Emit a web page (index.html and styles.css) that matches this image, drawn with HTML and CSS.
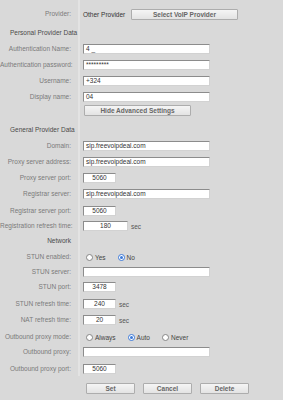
FILE: index.html
```html
<!DOCTYPE html>
<html>
<head>
<meta charset="utf-8">
<link rel="stylesheet" href="styles.css">
</head>
<body>
<div class="form">
  <div class="row h19 first">
    <div class="lab">Provider:</div>
    <div class="val"><span class="text">Other Provider</span><button class="btn wide sel">Select VoIP Provider</button></div>
  </div>
  <div class="row">
    <div class="lab"><span class="head left">Personal Provider Data</span></div>
    <div class="val"></div>
  </div>
  <div class="row">
    <div class="lab">Authentication Name:</div>
    <div class="val"><span class="inp long">4 _</span></div>
  </div>
  <div class="row">
    <div class="lab">Authentication password:</div>
    <div class="val"><span class="inp long">*********</span></div>
  </div>
  <div class="row">
    <div class="lab">Username:</div>
    <div class="val"><span class="inp long">+324</span></div>
  </div>
  <div class="row h13">
    <div class="lab">Display name:</div>
    <div class="val"><span class="inp long">04</span></div>
  </div>
  <div class="row h20">
    <div class="lab"></div>
    <div class="val"><button class="btn wide">Hide Advanced Settings</button></div>
  </div>
  <div class="row">
    <div class="lab"><span class="head left">General Provider Data</span></div>
    <div class="val"></div>
  </div>
  <div class="row">
    <div class="lab">Domain:</div>
    <div class="val"><span class="inp long">sip.freevoipdeal.com</span></div>
  </div>
  <div class="row">
    <div class="lab">Proxy server address:</div>
    <div class="val"><span class="inp long">sip.freevoipdeal.com</span></div>
  </div>
  <div class="row">
    <div class="lab">Proxy server port:</div>
    <div class="val"><span class="inp short">5060</span></div>
  </div>
  <div class="row h17">
    <div class="lab">Registrar server:</div>
    <div class="val"><span class="inp long">sip.freevoipdeal.com</span></div>
  </div>
  <div class="row h15">
    <div class="lab">Registrar server port:</div>
    <div class="val"><span class="inp short">5060</span></div>
  </div>
  <div class="row h15">
    <div class="lab">Registration refresh time:</div>
    <div class="val"><span class="inp mid">180</span><span class="unit">sec</span></div>
  </div>
  <div class="row">
    <div class="lab"><span class="head">Network</span></div>
    <div class="val"></div>
  </div>
  <div class="row h15">
    <div class="lab">STUN enabled:</div>
    <div class="val">
      <span class="radio"></span><span class="rtext yes">Yes</span>
      <span class="radio on"></span><span class="rtext">No</span>
    </div>
  </div>
  <div class="row h15">
    <div class="lab">STUN server:</div>
    <div class="val"><span class="inp long"></span></div>
  </div>
  <div class="row h17">
    <div class="lab">STUN port:</div>
    <div class="val"><span class="inp short">3478</span></div>
  </div>
  <div class="row">
    <div class="lab">STUN refresh time:</div>
    <div class="val"><span class="inp short">240</span><span class="unit">sec</span></div>
  </div>
  <div class="row h17">
    <div class="lab">NAT refresh time:</div>
    <div class="val"><span class="inp short">20</span><span class="unit">sec</span></div>
  </div>
  <div class="row h15">
    <div class="lab">Outbound proxy mode:</div>
    <div class="val">
      <span class="radio"></span><span class="rtext always">Always</span>
      <span class="radio on"></span><span class="rtext auto">Auto</span>
      <span class="radio"></span><span class="rtext">Never</span>
    </div>
  </div>
  <div class="row h17">
    <div class="lab">Outbound proxy:</div>
    <div class="val"><span class="inp long"></span></div>
  </div>
  <div class="row h13">
    <div class="lab">Outbound proxy port:</div>
    <div class="val"><span class="inp short">5060</span></div>
  </div>
  <div class="actions">
    <button class="btn small">Set</button>
    <button class="btn small">Cancel</button>
    <button class="btn small">Delete</button>
  </div>
</div>
</body>
</html>
```
FILE: styles.css
```css
html, body {
  margin: 0;
  padding: 0;
  background: #d9d9d9;
}
body {
  font-family: "Liberation Sans", Arial, sans-serif;
  font-size: 6.5px;
  color: #7a7a7a;
  width: 283px;
  height: 400px;
  overflow: hidden;
}
.form {
  display: flex;
  flex-direction: column;
}
.row {
  display: grid;
  grid-template-columns: 80px 1fr;
  height: 16px;
}
.row.h13 { height: 13px; }
.row.h15 { height: 15px; }
.row.h17 { height: 17px; }
.row.h19 { height: 19px; }
.row.h20 { height: 20px; }
.row.first { height: 26px; }
.row.first > .lab,
.row.first > .val { padding-top: 7px; }
.lab {
  border-right: 2px solid #e3e3e3;
  padding-right: 7px;
  text-align: right;
  line-height: 14px;
  height: 100%;
  box-sizing: border-box;
  white-space: nowrap;
  position: relative;
}
.val {
  padding-left: 3px;
  display: flex;
  align-items: center;
  height: 14px;
  white-space: nowrap;
}
.head {
  color: #4a4a4a;
}
.head.left {
  position: absolute;
  left: 10px;
  top: 0;
}
.text {
  color: #333;
  width: 48px;
}
.inp {
  display: block;
  box-sizing: border-box;
  height: 10px;
  background: #fff;
  border: 1px solid;
  border-color: #8c8c8c #d2d2d2 #d2d2d2 #8c8c8c;
  color: #333;
  line-height: 8px;
  padding-left: 2px;
  overflow: hidden;
}
.inp.long { width: 127px; }
.inp.short { width: 33px; text-align: center; padding-left: 0; }
.inp.mid { width: 45px; text-align: center; padding-left: 0; }
.unit {
  color: #555;
  margin-left: 3px;
}
.btn {
  display: block;
  box-sizing: border-box;
  height: 11px;
  margin: 0;
  padding: 0;
  border: 1px solid #adadad;
  border-radius: 1px;
  background: linear-gradient(#f5f5f5, #e3e3e3);
  font-family: "Liberation Sans", Arial, sans-serif;
  font-size: 6.5px;
  font-weight: bold;
  color: #666;
  line-height: 9px;
  text-align: center;
}
.btn.wide { width: 107px; margin-left: 1px; }
.btn.sel { margin-left: 0; }
.btn.small { width: 49px; }
.actions {
  display: flex;
  gap: 8px;
  padding-left: 86px;
  margin-top: 6px;
  height: 14px;
  align-items: center;
}
.radio {
  display: inline-block;
  box-sizing: border-box;
  width: 7px;
  height: 7px;
  border-radius: 50%;
  border: 1px solid #8a8a8a;
  background: radial-gradient(circle, #fff 60%, #eaeaea);
  margin-left: 3px;
  position: relative;
}
.radio.on {
  border-color: #3a78d8;
  background: #fff;
}
.radio.on::after {
  content: "";
  position: absolute;
  left: 1px;
  top: 1px;
  width: 3px;
  height: 3px;
  border-radius: 50%;
  background: #3a78d8;
}
.rtext {
  color: #444;
  margin-left: 2px;
}
.rtext.yes { margin-right: 9px; }
.rtext.always { margin-right: 9px; }
.rtext.auto { margin-right: 9px; }
```
